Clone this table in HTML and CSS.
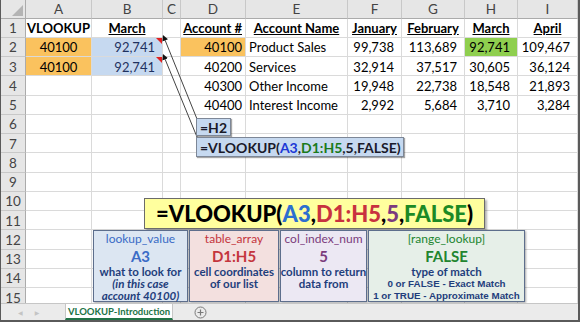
FILE: index.html
```html
<!DOCTYPE html>
<html>
<head>
<meta charset="utf-8">
<title>VLOOKUP-Introduction</title>
<link rel="stylesheet" href="styles.css">
</head>
<body>
<div class="window">
  <div class="sheet">
    <div class="grid">
      <div class="corner"><span class="corner-tri"></span></div>
      <div class="h">A</div><div class="h">B</div><div class="h">C</div><div class="h">D</div><div class="h">E</div><div class="h">F</div><div class="h">G</div><div class="h">H</div><div class="h">I</div>

      <div class="r">1</div>
      <div class="c b ctr">VLOOKUP</div>
      <div class="c b ctr"><u>March</u></div>
      <div class="c"></div>
      <div class="c b num-d"><u>Account #</u></div>
      <div class="c b ctr"><u>Account Name</u></div>
      <div class="c b ctr"><u>January</u></div>
      <div class="c b ctr"><u>February</u></div>
      <div class="c b ctr"><u>March</u></div>
      <div class="c b ctr"><u>April</u></div>

      <div class="r">2</div>
      <div class="c ctr orange">40100</div>
      <div class="c num blue-fill comment">92,741</div>
      <div class="c"></div>
      <div class="c num-d orange">40100</div>
      <div class="c">Product Sales</div>
      <div class="c num">99,738</div>
      <div class="c num">113,689</div>
      <div class="c num green-fill">92,741</div>
      <div class="c num">109,467</div>

      <div class="r">3</div>
      <div class="c ctr orange">40100</div>
      <div class="c num blue-fill comment">92,741</div>
      <div class="c"></div>
      <div class="c num-d">40200</div>
      <div class="c">Services</div>
      <div class="c num">32,914</div>
      <div class="c num">37,517</div>
      <div class="c num">30,605</div>
      <div class="c num">36,124</div>

      <div class="r">4</div>
      <div class="c"></div>
      <div class="c"></div>
      <div class="c"></div>
      <div class="c num-d">40300</div>
      <div class="c">Other Income</div>
      <div class="c num">19,948</div>
      <div class="c num">22,738</div>
      <div class="c num">18,548</div>
      <div class="c num">21,893</div>

      <div class="r">5</div>
      <div class="c"></div>
      <div class="c"></div>
      <div class="c"></div>
      <div class="c num-d">40400</div>
      <div class="c">Interest Income</div>
      <div class="c num">2,992</div>
      <div class="c num">5,684</div>
      <div class="c num">3,710</div>
      <div class="c num">3,284</div>

      <div class="r">6</div><div class="c"></div><div class="c"></div><div class="c"></div><div class="c"></div><div class="c"></div><div class="c"></div><div class="c"></div><div class="c"></div><div class="c"></div>
      <div class="r">7</div><div class="c"></div><div class="c"></div><div class="c"></div><div class="c"></div><div class="c"></div><div class="c"></div><div class="c"></div><div class="c"></div><div class="c"></div>
      <div class="r">8</div><div class="c"></div><div class="c"></div><div class="c"></div><div class="c"></div><div class="c"></div><div class="c"></div><div class="c"></div><div class="c"></div><div class="c"></div>
      <div class="r">9</div><div class="c"></div><div class="c"></div><div class="c"></div><div class="c"></div><div class="c"></div><div class="c"></div><div class="c"></div><div class="c"></div><div class="c"></div>
      <div class="r">10</div><div class="c"></div><div class="c"></div><div class="c"></div><div class="c"></div><div class="c"></div><div class="c"></div><div class="c"></div><div class="c"></div><div class="c"></div>
      <div class="r">11</div><div class="c"></div><div class="c"></div><div class="c"></div><div class="c"></div><div class="c"></div><div class="c"></div><div class="c"></div><div class="c"></div><div class="c"></div>
      <div class="r">12</div><div class="c"></div><div class="c"></div><div class="c"></div><div class="c"></div><div class="c"></div><div class="c"></div><div class="c"></div><div class="c"></div><div class="c"></div>
      <div class="r">13</div><div class="c"></div><div class="c"></div><div class="c"></div><div class="c"></div><div class="c"></div><div class="c"></div><div class="c"></div><div class="c"></div><div class="c"></div>
      <div class="r">14</div><div class="c"></div><div class="c"></div><div class="c"></div><div class="c"></div><div class="c"></div><div class="c"></div><div class="c"></div><div class="c"></div><div class="c"></div>
      <div class="r">15</div><div class="c"></div><div class="c"></div><div class="c"></div><div class="c"></div><div class="c"></div><div class="c"></div><div class="c"></div><div class="c"></div><div class="c"></div>
    </div>

    <svg class="connectors" width="580" height="303" viewBox="0 0 580 303">
      <defs>
        <marker id="ah" viewBox="0 0 6 6" refX="0.5" refY="3" markerWidth="6" markerHeight="6" orient="auto-start-reverse">
          <path d="M0,0 L6,3 L0,6 z" fill="#111"/>
        </marker>
      </defs>
      <line x1="164" y1="40" x2="196" y2="119" stroke="#444" stroke-width="1" marker-start="url(#ah)"/>
      <line x1="164" y1="59" x2="196" y2="137" stroke="#444" stroke-width="1" marker-start="url(#ah)"/>
    </svg>

    <div class="note note-h2">=H2</div>
    <div class="note note-vl">=VLOOKUP(<span class="n-blue">A3</span>,<span class="n-green">D1:H5</span>,5,FALSE)</div>

    <div class="formula">=VLOOKUP(<span class="f-blue">A3</span>,<span class="f-red">D1:H5</span>,<span class="f-purple">5</span>,<span class="f-green">FALSE</span>)</div>

    <div class="legend">
      <div class="arg arg-lookup">
        <div class="arg-title">lookup_value</div>
        <div class="arg-value">A3</div>
        <div class="arg-desc">what to look for</div>
        <div class="arg-desc it">(in this case</div>
        <div class="arg-desc it">account 40100)</div>
      </div>
      <div class="arg arg-table">
        <div class="arg-title">table_array</div>
        <div class="arg-value">D1:H5</div>
        <div class="arg-desc">cell coordinates</div>
        <div class="arg-desc">of our list</div>
      </div>
      <div class="arg arg-col">
        <div class="arg-title">col_index_num</div>
        <div class="arg-value">5</div>
        <div class="arg-desc">column to return</div>
        <div class="arg-desc">data from</div>
      </div>
      <div class="arg arg-range">
        <div class="arg-title">[range_lookup]</div>
        <div class="arg-value">FALSE</div>
        <div class="arg-desc">type of match</div>
        <div class="arg-desc small">0 or FALSE - Exact Match</div>
        <div class="arg-desc small">1 or TRUE - Approximate Match</div>
      </div>
    </div>
  </div>

  <div class="tabs">
    <div class="nav"><span class="nav-arrow">&#9664;</span><span class="nav-arrow">&#9654;</span></div>
    <div class="tab">VLOOKUP-Introduction</div>
    <div class="add">
      <svg width="13" height="13" viewBox="0 0 13 13"><circle cx="6.5" cy="6.5" r="5.5" fill="none" stroke="#7a7a7a" stroke-width="1"/><path d="M6.5 3.5v6M3.5 6.5h6" stroke="#7a7a7a" stroke-width="1.2"/></svg>
    </div>
  </div>
</div>
</body>
</html>
```

FILE: styles.css
```css
* { box-sizing: border-box; }
html, body { margin: 0; padding: 0; }
body {
  width: 580px;
  height: 322px;
  overflow: hidden;
  background: #fff;
  font-family: "Lato", "DejaVu Sans", sans-serif;
  color: #000;
}
.window {
  width: 580px;
  height: 322px;
  display: flex;
  flex-direction: column;
  border-left: 1px solid #5a5a5a;
  border-right: 2px solid #5a5a5a;
  border-bottom: 2px solid #5a5a5a;
}
.sheet {
  position: relative;
  height: 303px;
  flex: none;
  overflow: hidden;
}
.grid {
  display: grid;
  grid-template-columns: 25px 66px 71px 18px 65px 102px 54px 63px 53px 1fr;
  grid-template-rows: 18.5px repeat(15, 19.25px);
}
.corner {
  position: relative;
  background: #e6e6e6;
  border-right: 1px solid #ababab;
  border-bottom: 1px solid #ababab;
}
.corner-tri {
  position: absolute;
  right: 2px;
  bottom: 2px;
  width: 0;
  height: 0;
  border-left: 11px solid transparent;
  border-bottom: 11px solid #b4b4b4;
}
.h, .r {
  background: #e6e6e6;
  color: #444;
  font-size: 13.5px;
  display: flex;
  align-items: center;
  justify-content: center;
}
.h {
  border-right: 1px solid #c8c8c8;
  border-bottom: 1px solid #ababab;
}
.r {
  border-right: 1px solid #ababab;
  border-bottom: 1px solid #c8c8c8;
  padding-top: 1px;
}
.c {
  position: relative;
  border-right: 1px solid #dadada;
  border-bottom: 1px solid #dadada;
  font-size: 13px;
  padding: 1px 3px 0;
  display: flex;
  align-items: center;
  white-space: nowrap;
}
.b { font-weight: 700; }
.ctr { justify-content: center; }
.num { justify-content: flex-end; padding-right: 7px; }
.num-d { justify-content: flex-end; padding-right: 3px; }
.orange { background: #fac25e; }
.blue-fill { background: #c6d9f0; color: #1f3260; }
.green-fill { background: #8fcf4f; }
.comment::after {
  content: "";
  position: absolute;
  top: 0;
  right: 0;
  width: 0;
  height: 0;
  border-top: 6px solid #e02020;
  border-left: 6px solid transparent;
}
.connectors {
  position: absolute;
  left: 0;
  top: 0;
  pointer-events: none;
}
.note {
  position: absolute;
  left: 195px;
  background: #c6d9f0;
  border: 1px solid #7d8797;
  box-shadow: 1px 1px 1px rgba(0,0,0,0.35);
  font-size: 14px;
  font-weight: 700;
  color: #1a1a2a;
  padding: 0 3px;
  display: flex;
  align-items: center;
  white-space: nowrap;
}
.note-h2 { top: 118px; width: 35px; height: 18px; }
.note-vl { top: 137px; width: 208px; height: 20px; }
.n-blue { color: #1d38d6; }
.n-green { color: #1a7a1a; }

.formula {
  position: absolute;
  left: 143px;
  top: 198px;
  width: 341px;
  height: 31px;
  background: #ffff9e;
  border: 1px solid #6b6b6b;
  box-shadow: 2px 2px 2px rgba(0,0,0,0.3);
  font-size: 22px;
  font-weight: 900;
  display: flex;
  align-items: center;
  justify-content: center;
  white-space: nowrap;
}
.f-blue { color: #2d6fd0; }
.f-red { color: #c8323f; }
.f-purple { color: #7b3a7e; }
.f-green { color: #1c8a25; }

.legend {
  position: absolute;
  left: 92px;
  top: 230px;
  display: flex;
  gap: 1px;
}
.arg {
  height: 72px;
  border: 1px solid #5d6e8c;
  box-shadow: 1px 1px 2px rgba(0,0,0,0.35);
  display: flex;
  flex-direction: column;
  align-items: center;
  padding-top: 1px;
  color: #1f3e7c;
  font-weight: 700;
  white-space: nowrap;
}
.arg-title { font-size: 12px; font-weight: 400; line-height: 14px; }
.arg-value { font-size: 15px; font-weight: 700; line-height: 19px; margin-top: 1px; }
.arg-desc { font-size: 11.5px; line-height: 12px; }
.arg-desc.it { font-style: italic; }
.arg-desc.small { font-family: "Liberation Sans", Arial, sans-serif; font-size: 9.8px; line-height: 11.5px; }
.arg-lookup { width: 95px; background: #dce6f2; }
.arg-lookup .arg-title, .arg-lookup .arg-value { color: #3a6cc6; }
.arg-table { width: 90px; background: #f3e0df; }
.arg-table .arg-title, .arg-table .arg-value { color: #c4353d; }
.arg-col { width: 87px; background: #ece8f3; }
.arg-col .arg-title, .arg-col .arg-value { color: #7b3c7c; }
.arg-range { width: 157px; background: #e6efe8; }
.arg-range .arg-title, .arg-range .arg-value { color: #22852f; }

.tabs {
  height: 17px;
  flex: none;
  display: flex;
  align-items: stretch;
  background: #ebebeb;
  border-top: 1px solid #c6c6c6;
}
.nav {
  width: 64px;
  display: flex;
  align-items: center;
  gap: 12px;
  padding-left: 17px;
  color: #c4c4c4;
  font-size: 6px;
}
.tab {
  width: 108px;
  background: #fff;
  border-left: 1px solid #c6c6c6;
  border-right: 1px solid #c6c6c6;
  border-bottom: 2px solid #217346;
  color: #217346;
  font-size: 9.5px;
  font-weight: 700;
  display: flex;
  align-items: center;
  justify-content: center;
  white-space: nowrap;
}
.add {
  margin-left: 21px;
  display: flex;
  align-items: center;
}
```
